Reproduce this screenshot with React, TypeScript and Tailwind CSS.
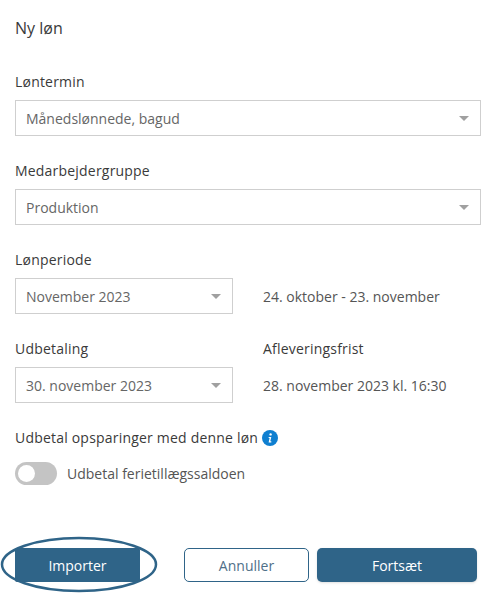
const labelClass = 'text-sm leading-5 font-medium tracking-[0.2px] text-[#3a3a3a]';

const Select = ({ value, className }: { value: string; className: string }) => (
  <div className={`flex h-9 items-center justify-between border border-[#cfcfcf] bg-white pl-[10px] pr-[10px] ${className}`}>
    <span className="pt-px text-sm text-[#666666]">{value}</span>
    <svg width="10" height="5" viewBox="0 0 10 5" className="mr-px">
      <path d="M0 0h10L5 5z" fill="#a0a0a0" />
    </svg>
  </div>
);

const Field = ({ label, value }: { label: string; value: string }) => (
  <div className="flex flex-col gap-2">
    <div className={labelClass}>{label}</div>
    <Select value={value} className="w-full" />
  </div>
);

const App = () => {
  return (
    <div className="relative h-[598px] w-[494px] overflow-hidden bg-white pl-[15px] pr-[13px] pt-[18px] font-['Open_Sans',sans-serif]">
      <div className="mb-[34px] text-base leading-5 font-medium text-[#3a3a3a]">Ny løn</div>

      <div className="flex flex-col gap-[25px]">
        <Field label="Løntermin" value="Månedslønnede, bagud" />
        <Field label="Medarbejdergruppe" value="Produktion" />

        <div className="grid grid-cols-[218px_1fr] gap-x-[30px] gap-y-2">
          <div className={`col-span-2 ${labelClass}`}>Lønperiode</div>
          <Select value="November 2023" className="w-full" />
          <div className="flex items-center pt-px text-sm text-[#555555]">24. oktober - 23. november</div>
        </div>

        <div className="grid grid-cols-[218px_1fr] gap-x-[30px] gap-y-2">
          <div className={labelClass}>Udbetaling</div>
          <div className={labelClass}>Afleveringsfrist</div>
          <Select value="30. november 2023" className="w-full" />
          <div className="flex items-center pt-px text-sm text-[#555555]">28. november 2023 kl. 16:30</div>
        </div>

        <div>
          <div className="flex items-center gap-1">
            <span className={labelClass}>Udbetal opsparinger med denne løn</span>
            <svg width="16" height="16" viewBox="0 0 16 16">
              <circle cx="8" cy="8" r="8" fill="#0f7fd0" />
              <circle cx="8.6" cy="4.4" r="1.2" fill="#fff" />
              <path d="M6.7 7h2.6l-1 4.3h1V12.4H6.6l1-4.3h-1z" fill="#fff" />
            </svg>
          </div>
          <div className="mt-[14px] flex items-center gap-[10px]">
            <div className="flex h-[23px] w-[42px] items-center rounded-full bg-[#c4c4c4] pl-[3px]">
              <div className="h-[17px] w-[17px] rounded-full bg-white" />
            </div>
            <span className="text-sm text-[#555555]">Udbetal ferietillægssaldoen</span>
          </div>
        </div>
      </div>

      <div className="mt-[63px] flex">
        <button className="h-[34px] w-[125px] rounded-[2px] bg-[#2f6488] pt-px text-sm font-medium text-white">Importer</button>
        <button className="ml-[44px] h-[34px] w-[125px] rounded-[5px] border border-[#2f6488] bg-white pt-px text-sm font-medium text-[#4f6f88]">Annuller</button>
        <button className="ml-2 h-[34px] w-[160px] rounded-[5px] bg-[#2f6488] pt-px text-sm font-medium text-white shadow-sm">Fortsæt</button>
      </div>

      {/* hand drawn highlight around Importer */}
      <svg width="160" height="58" viewBox="0 0 160 58" className="absolute left-0 top-[536px]">
        <ellipse cx="79" cy="28.5" rx="77" ry="26.5" fill="none" stroke="#2f6488" strokeWidth="2.5" />
      </svg>
    </div>
  );
};

export default App;
